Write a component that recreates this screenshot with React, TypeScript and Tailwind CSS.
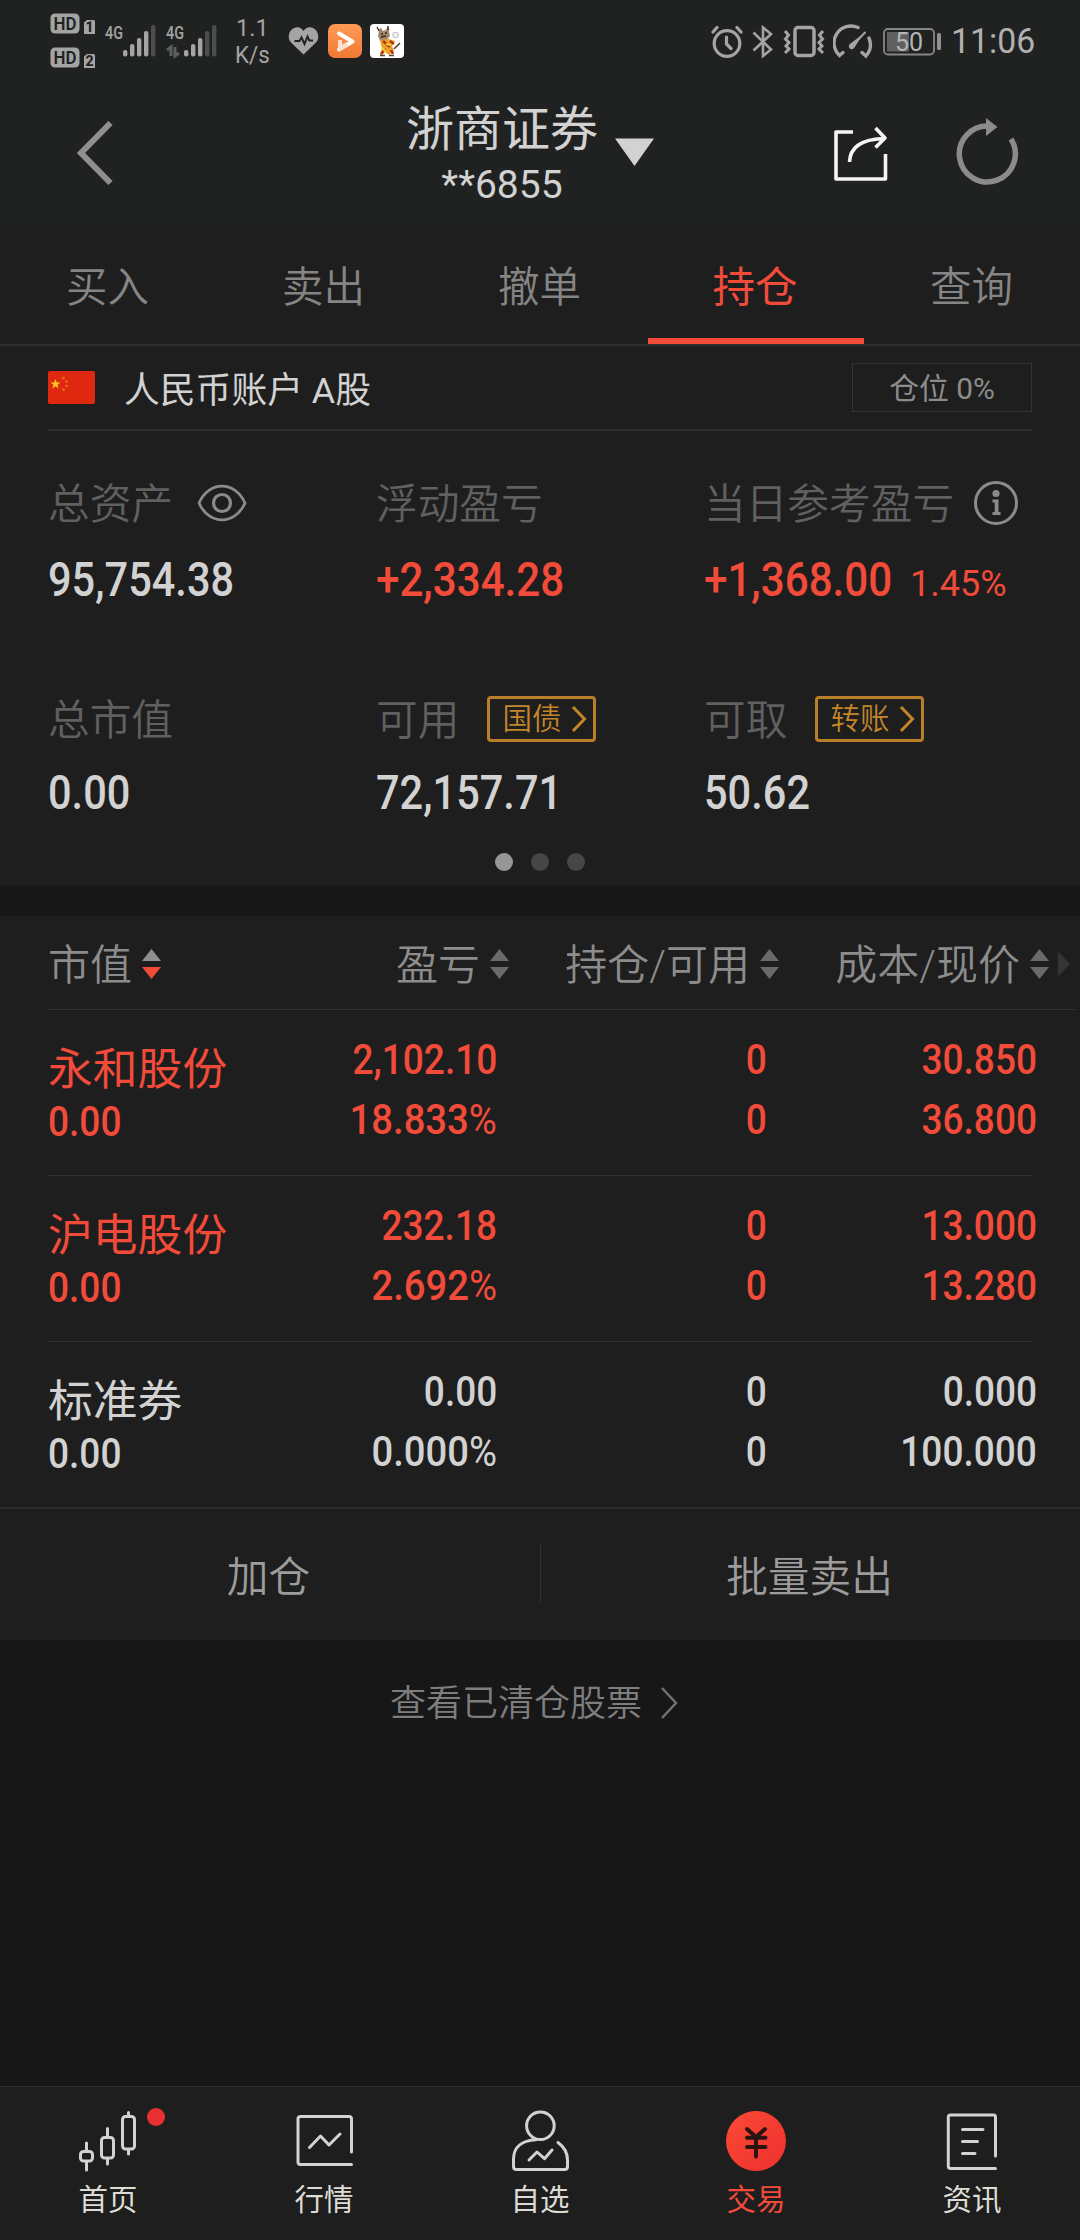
import React from 'react';

const RED = 'text-[#f24b3a]';
const WHITE = 'text-[#d2d2d2]';

function Digits({ children, right = false, big = false }: { children: string; right?: boolean; big?: boolean }) {
  const percent = children.endsWith('%');
  const signed = children.startsWith('+');
  const size = big
    ? `text-[49px] leading-[50px] ${signed ? 'scale-x-[0.86]' : 'scale-x-[0.848]'}`
    : `text-[42px] leading-[44px] ${percent ? 'scale-x-[0.91]' : 'scale-x-[0.882]'}`;
  return (
    <span className={`block w-max whitespace-nowrap font-medium ${size} ${right ? 'origin-right' : 'origin-left'}`}>
      {percent ? children.slice(0, -1) : children}
      {percent && <span className="font-normal">%</span>}
    </span>
  );
}

function HdBadge({ n }: { n: string }) {
  return (
    <svg className="overflow-visible" width="46" height="22" viewBox="0 0 46 22">
      <rect x="0.500" y="0.500" width="29" height="20" rx="4.500" fill="#a3a4a3" />
      <text x="15" y="17" textAnchor="middle" fontSize="18" fontWeight="600" fill="#202221" textLength="23" lengthAdjust="spacingAndGlyphs">HD</text>
      <path d="M34 9.500l3-2.500h6.500q1.500 0 1.500 1.500V21H34z" fill="#a3a4a3" />
      <text x="39.500" y="19.300" textAnchor="middle" fontSize="14" fontWeight="800" fill="#202221">{n}</text>
    </svg>
  );
}

function Signal({ level, data = false }: { level: number; data?: boolean }) {
  const tops = [49, 43, 37, 30, 24];
  return (
    <svg className="overflow-visible" width="54" height="34" viewBox="0 23 54 34">
      <text x="0" y="38" fontSize="19" fontWeight="500" fill="#a3a4a3" textLength="18" lengthAdjust="spacingAndGlyphs">4G</text>
      {data && <path d="M1 49l4-3v9M9 46v9l4-3" stroke="#5d5f5e" strokeWidth="3" fill="none" />}
      {tops.map((t, i) => (
        <rect key={t} x={18 + i * 7} y={t} width="4.400" height={55.5 - t} rx="2" fill={i < level ? '#a3a4a3' : '#4c4e4d'} />
      ))}
    </svg>
  );
}

function StatusBar() {
  return (
    <div className="flex h-[82px] items-center pl-[50px] pr-[44px] text-[#a3a4a3]">
      <div className="flex w-[55px] flex-col gap-[12px]">
        <HdBadge n="1" />
        <HdBadge n="2" />
      </div>
      <Signal level={4} />
      <div className="ml-[7px]"><Signal level={3} data /></div>
      <div className="ml-[15px] w-[52px] pt-[2px] text-[23.5px] leading-[27px]">
        <div className="pl-[1px]">1.1</div>
        <div className="origin-left scale-x-95">K/s</div>
      </div>
      <svg className="ml-px" width="31" height="28" viewBox="0 0 31 28">
        <path d="M15.500 27.500L3 15.500C-1 11 .5 3.500 6 1c4-1.700 7.500-.2 9.500 3 2-3.200 5.500-4.700 9.500-3 5.500 2.500 7 10 3 14.500z" fill="#a3a4a3" />
        <path d="M6.500 14h5l2-3.500 3 6.500 3-7.500 1.800 4H25" fill="none" stroke="#202221" strokeWidth="2" />
      </svg>
      <svg className="ml-[9px]" width="34" height="34" viewBox="0 0 34 34">
        <defs>
          <linearGradient id="app" x1="0" y1="0" x2="0" y2="1">
            <stop offset="0" stopColor="#ff9a56" />
            <stop offset="1" stopColor="#f07a32" />
          </linearGradient>
        </defs>
        <rect width="34" height="34" rx="7" fill="url(#app)" />
        <path d="M11 25.500L24.500 17.500 11 9.500" fill="none" stroke="#fff" strokeWidth="4" strokeLinejoin="round" strokeLinecap="round" />
        <path d="M12 16v8.500l7-4.500" fill="none" stroke="#ffe0cb" strokeWidth="4" strokeLinejoin="round" />
      </svg>
      <svg className="ml-[8px]" width="34" height="34" viewBox="0 0 34 34">
        <rect width="34" height="34" rx="4" fill="#fff" />
        <path d="M9 7q0-3 2-3l2 3 3-1 2-4q2 3 1 6l1 4-3 4-7 1-2-5z" fill="#a08670" />
        <path d="M9 7L7 3M18 6l0-4M11 10h2M15 9h2M11 13l5-1" stroke="#3c2a20" strokeWidth="1.300" />
        <path d="M10 16l9-1 6 2-3 5 2 5-5 4-4-3-3 3H10l2-6z" fill="#e9a32a" />
        <path d="M13 17l7 6M21 26l2 4M11 30l4-5M20 17l4 3" stroke="#b8321f" strokeWidth="2.600" />
        <path d="M16 20l5 1M12 24l4 4" stroke="#f7d21c" strokeWidth="2" />
        <path d="M24 25l6-6M10 31.500h5M19 31.500h5" stroke="#5d4536" strokeWidth="1.600" />
        <circle cx="25.500" cy="11" r="2.800" fill="#f4f4f4" stroke="#bbb" />
      </svg>

      <div className="ml-auto flex items-center">
        <svg width="32" height="33" viewBox="0 0 32 33" fill="none" stroke="#a3a4a3" strokeWidth="3.200" strokeLinecap="round">
          <circle cx="16" cy="18.500" r="12.800" />
          <path d="M15.500 12v7l4.500 4.500M2 7l4-4.500M30 7l-4-4.500" />
        </svg>
        <svg className="ml-[9px]" width="22" height="33" viewBox="0 0 22 33" fill="none" stroke="#a3a4a3" strokeWidth="2.600">
          <path d="M1.500 7.500L19 24.500l-8 6.500V2.500l8 6.500L1.500 25.500" />
        </svg>
        <svg className="ml-[9px]" width="42" height="33" viewBox="0 0 42 33" fill="none" stroke="#a3a4a3" strokeWidth="3.500">
          <rect x="12" y="2.500" width="19" height="28" rx="3" />
          <path d="M2 6l3.500 4L2.500 14l3.500 3.500-3 3.500 3 3-4 4M40 6l-3.500 4 3 4-3.500 3.500 3 3.500-3 3 4 4" strokeWidth="3" />
        </svg>
        <svg className="ml-[8px]" width="40" height="35" viewBox="0 0 40 35" fill="none" stroke="#a3a4a3" strokeWidth="3.400" strokeLinecap="round">
          <path d="M25 3.500A17 17 0 0 0 6.500 31.500l3.500-3M36 14q4 10-3 18l-4-3.500" />
          <path d="M32 8.500L19 22" strokeWidth="2" />
          <path d="M30 10L17.500 19.500a3 3 0 1 0 4 4z" fill="#a3a4a3" stroke="none" />
        </svg>
        <svg className="ml-[10px] mt-px" width="60" height="28" viewBox="0 0 60 28">
          <rect x="1" y="1" width="50" height="25.500" rx="4" fill="none" stroke="#858786" strokeWidth="1.800" />
          <rect x="4" y="4" width="22" height="19.500" fill="#606060" />
          <text x="26" y="22.500" textAnchor="middle" fontSize="25" fill="#b4b5b4">50</text>
          <rect x="54" y="5" width="4" height="17" rx="1.500" fill="#8f9190" />
        </svg>
        <span className="ml-[8px] w-[85px] origin-left scale-x-[0.965] pt-[1px] text-[35px] leading-[40px] text-[#b0b1b0]">11:06</span>
      </div>
    </div>
  );
}

function Header() {
  return (
    <div className="flex h-[142px] pl-[76px]">
      <svg className="mt-[37px]" width="38" height="68" viewBox="0 0 38 68">
        <path d="M34.500 4L5 34l29.500 30" fill="none" stroke="#8e8f8e" strokeWidth="6" />
      </svg>
      <div className={`ml-[292px] flex w-[192px] flex-col items-center whitespace-nowrap ${WHITE}`}>
        <div className="mt-[18px] text-[48px] leading-[60px]">浙商证券</div>
        <div className="mt-[2px] text-[39px] leading-[46px]">**6855</div>
      </div>
      <svg className="ml-[16px] mt-[56px]" width="41" height="29" viewBox="0 0 41 29">
        <path d="M1 0.500h39L20.500 28z" fill="#d2d2d2" />
      </svg>
      <svg className="ml-[178px] mt-[44px]" width="56" height="56" viewBox="0 0 56 56" fill="none" stroke="#f5f5f5" strokeWidth="3.600" strokeLinejoin="round">
        <path d="M20 6H3v47h49.500V28" />
        <path d="M16.500 36C17 22 27 13.500 50 12.500M42.500 2L52 12 42.500 21.500" />
      </svg>
      <svg className="ml-[64px] mt-[34px]" width="66" height="70" viewBox="0 0 66 70">
        <path d="M58 23A28 28 0 1 1 36 10" fill="none" stroke="#8a8b8a" strokeWidth="5.500" />
        <path d="M33 2l11.500 9L33 20z" fill="#8a8b8a" />
      </svg>
    </div>
  );
}

function Tabs() {
  return (
    <div className="grid h-[122px] grid-cols-5 border-b-2 border-[#2d2d2d]">
      {['买入', '卖出', '撤单', '持仓', '查询'].map((t) => {
        const active = t === '持仓';
        return (
          <div key={t} className={`flex flex-col items-center justify-between ${active ? RED : 'text-[#858585]'}`}>
            <span className={`pt-[34px] leading-[60px] ${active ? 'pr-[2px] text-[42.500px]' : 'pr-[1px] text-[41.500px] font-[350]'}`}>{t}</span>
            {active && <span className="h-[6px] w-full bg-[#f24b3a]" />}
          </div>
        );
      })}
    </div>
  );
}

function Account() {
  return (
    <div className="mx-[48px] flex h-[85px] items-center border-b-2 border-[#2d2d2d]">
      <svg className="rounded-[2px]" width="47" height="33" viewBox="0 0 47 33">
        <rect width="47" height="33" fill="#de2910" />
        <path d="M7.500 8l1.300 3.500h3.700l-3 2.300 1.100 3.600-3.100-2.200-3.100 2.200 1.100-3.600-3-2.300h3.700z" fill="#ffc61a" />
        <g fill="#f0701a">
          <circle cx="15.500" cy="7" r="1.300" />
          <circle cx="18.500" cy="10.500" r="1.300" />
          <circle cx="18.500" cy="15" r="1.300" />
          <circle cx="15.500" cy="18.500" r="1.300" />
        </g>
      </svg>
      <span className={`ml-[29px] mt-[6px] text-[35.800px] leading-[50px] ${WHITE}`}>人民币账户 A股</span>
      <span className="ml-auto flex h-[49px] w-[180px] items-center justify-center border border-[#353535] pt-[2px] text-[29.800px] leading-[40px] text-[#8c8c8c]">仓位 0%</span>
    </div>
  );
}

function Chip({ children }: { children: string }) {
  return (
    <span className="-mt-[1px] ml-[28px] flex h-[46px] w-[109px] items-center rounded-[4px] border-[3px] border-[#b97f28] pl-[12px] text-[29.500px] leading-[40px] text-[#c4862a]">
      {children}
      <svg className="ml-[10px]" width="17" height="28" viewBox="0 0 17 28">
        <path d="M2 2l11.500 12L2 26" fill="none" stroke="#c4862a" strokeWidth="3" />
      </svg>
    </span>
  );
}

function Label({ children, extra }: { children: string; extra?: React.ReactNode }) {
  return (
    <div className="flex h-[46px] items-center whitespace-nowrap text-[41.700px] leading-[46px] font-[350] text-[#606060]">
      <span className="pt-[4px]">{children}</span>
      {extra}
    </div>
  );
}

function Assets() {
  return (
    <div className="h-[455px] pl-[48px]">
      <div className="grid grid-cols-[328px_328px_1fr] pt-[49px]">
        <div>
          <Label
            extra={
              <svg className="ml-[24px]" width="50" height="38" viewBox="0 0 50 38" fill="none" stroke="#8b8b8b" strokeWidth="2.800">
                <path d="M2 19C12-3.500 38-3.500 48 19 38 41.500 12 41.500 2 19z" strokeLinejoin="round" />
                <circle cx="25" cy="19" r="8.500" strokeWidth="3.200" />
              </svg>
            }
          >
            总资产
          </Label>
          <div className={`mt-[29px] ${WHITE}`}><Digits big>95,754.38</Digits></div>
        </div>
        <div>
          <Label>浮动盈亏</Label>
          <div className={`mt-[29px] ${RED}`}><Digits big>+2,334.28</Digits></div>
        </div>
        <div>
          <Label
            extra={
              <svg className="ml-[19px]" width="46" height="46" viewBox="0 0 46 46">
                <circle cx="23" cy="23" r="20.500" fill="none" stroke="#8b8b8b" strokeWidth="3" />
                <circle cx="23" cy="13.500" r="3.600" fill="#8b8b8b" />
                <path d="M19.500 19.500h6v12.500h2v3h-8v-3h2.200v-9.500h-2.200z" fill="#8b8b8b" />
              </svg>
            }
          >
            当日参考盈亏
          </Label>
          <div className={`mt-[29px] flex items-baseline ${RED}`}>
            <div className="w-[206px]"><Digits big>+1,368.00</Digits></div>
            <span className="text-[36px] leading-[40px]">1.45%</span>
          </div>
        </div>
      </div>
      <div className="mt-[91px] grid grid-cols-[328px_328px_1fr]">
        <div>
          <Label>总市值</Label>
          <div className={`mt-[26px] ${WHITE}`}><Digits big>0.00</Digits></div>
        </div>
        <div>
          <Label extra={<Chip>国债</Chip>}>可用</Label>
          <div className={`mt-[26px] ${WHITE}`}><Digits big>72,157.71</Digits></div>
        </div>
        <div>
          <Label extra={<Chip>转账</Chip>}>可取</Label>
          <div className={`mt-[26px] ${WHITE}`}><Digits big>50.62</Digits></div>
        </div>
      </div>
      <div className="-ml-[48px] mt-[35px] flex justify-center gap-[18px]">
        <span className="size-[18px] rounded-full bg-[#969696]" />
        <span className="size-[18px] rounded-full bg-[#464648]" />
        <span className="size-[18px] rounded-full bg-[#464648]" />
      </div>
    </div>
  );
}

function Sort({ up = '#6a6a6a', down = '#6a6a6a' }: { up?: string; down?: string }) {
  return (
    <svg className="-mt-[2px] ml-[10px] shrink-0" width="19" height="30" viewBox="0 0 19 30">
      <path d="M9.500 0L19 12H0z" fill={up} />
      <path d="M9.500 30L19 18H0z" fill={down} />
    </svg>
  );
}

const stocks = [
  { name: '永和股份', value: '0.00', cols: [['2,102.10', '18.833%'], ['0', '0'], ['30.850', '36.800']], color: RED },
  { name: '沪电股份', value: '0.00', cols: [['232.18', '2.692%'], ['0', '0'], ['13.000', '13.280']], color: RED },
  { name: '标准券', value: '0.00', cols: [['0.00', '0.000%'], ['0', '0'], ['0.000', '100.000']], color: WHITE },
];

function Holdings() {
  return (
    <div className="bg-[#1e1e1e]">
      <div className="grid h-[93px] grid-cols-[239px_270px_270px_270px_31px] items-center pt-[5px] text-[42px] leading-[50px] font-[350] text-[#8c8c8c]">
        <div className="flex items-center pl-[48px]"><span className="pt-[1px]">市值</span><Sort up="#8f8f8f" down="#f24b3a" /></div>
        {['盈亏', '持仓/可用', '成本/现价'].map((h) => (
          <div key={h} className="flex items-center justify-end whitespace-nowrap"><span className="pt-[1px]">{h}</span><Sort /></div>
        ))}
        <svg className="-mt-[2px] ml-[9px]" width="12" height="26" viewBox="0 0 12 26">
          <path d="M0 0.500L12 13 0 25.500z" fill="#343434" />
        </svg>
      </div>
      {stocks.map((s, i) => (
        <div key={s.name} className={`h-[166px] ${s.color}`}>
          <div className={`h-px bg-[#303030] ${i === 0 ? 'ml-[48px] mr-[3px]' : 'mx-[48px]'}`} />
          <div className="grid grid-cols-[227px_270px_270px_270px] pt-[28px]">
            <div className="whitespace-nowrap pl-[48px] pt-[5px]">
              <div className="text-[44.800px] leading-[54px]">{s.name}</div>
              <div className="mt-[3px]"><Digits>{s.value}</Digits></div>
            </div>
            {s.cols.map((c, j) => (
              <div key={j} className="flex flex-col items-end gap-[16px]">
                <Digits right>{c[0]}</Digits>
                <Digits right>{c[1]}</Digits>
              </div>
            ))}
          </div>
        </div>
      ))}
      <div className="flex h-[133px] items-center border-t-2 border-[#2b2b2b] pb-[1px] text-[41.700px] leading-[50px] font-[350] text-[#9c9c9c]">
        <span className="flex-1 pr-[3px] pt-[7px] text-center">加仓</span>
        <span className="h-[60px] w-px bg-[#303030]" />
        <span className="flex-1 pr-[2px] pt-[7px] text-center">批量卖出</span>
      </div>
    </div>
  );
}

const zig = { fill: 'none', stroke: '#d2d2d2', strokeWidth: 3, strokeLinecap: 'round' as const, strokeLinejoin: 'round' as const };

const navItems = [
  {
    label: '首页',
    icon: (
      <svg width="60" height="62" viewBox="0 0 60 62" {...zig}>
        <rect x="2.500" y="41.500" width="12" height="9.500" rx="3" />
        <path d="M8.500 33v8M8.500 51.500v8.500M29.500 18.500V27M29.500 48.500V54M50.500 2.500V6M50.500 40.500V44" />
        <rect x="23.500" y="27.500" width="12" height="20.500" rx="3" />
        <rect x="44.500" y="6.500" width="12" height="32.500" rx="3" />
      </svg>
    ),
  },
  {
    label: '行情',
    icon: (
      <svg width="60" height="62" viewBox="0 0 60 62" {...zig}>
        <path d="M57.500 42V9q0-2.500-2.500-2.500H6.500Q4 6.500 4 9v43q0 2.500 2.500 2.500h51" />
        <path d="M15.500 37.500L26.500 26l8.500 9 11-11" />
      </svg>
    ),
  },
  {
    label: '自选',
    icon: (
      <svg width="60" height="62" viewBox="0 0 60 62" {...zig}>
        <circle cx="30.400" cy="15.700" r="13.800" />
        <path d="M26 29.700C12 30.500 3.500 37 3.500 49v7.500Q3.500 59.500 6.500 59.500h48q3 0 3-3V50c0-8-4-13.500-9.500-17.500" />
        <path d="M19 50l8-8 7.500 6.700L42 40" />
      </svg>
    ),
  },
  {
    label: '交易',
    icon: (
      <svg width="60" height="62" viewBox="0 0 60 62" fill="none">
        <defs>
          <linearGradient id="coin" x1="0" y1="0" x2="1" y2="1">
            <stop offset="0" stopColor="#fb4a34" />
            <stop offset="1" stopColor="#ee2f30" />
          </linearGradient>
        </defs>
        <circle cx="30" cy="31" r="30" fill="url(#coin)" />
        <path d="M21 19l9 8 9-8M21 27.800h18.500M21 37h18.500M30 27v19.500" stroke="#2b1312" strokeWidth="4" strokeLinecap="round" />
      </svg>
    ),
  },
  {
    label: '资讯',
    icon: (
      <svg width="60" height="62" viewBox="0 0 60 62" {...zig}>
        <path d="M53.500 46V7q0-2-2-2H8.500Q6.300 5 6.300 7v49q0 2.500 2.200 2.500h45" />
        <path d="M20.500 19.500h20.500M20.500 31.500h15M20.500 43.500H33" />
      </svg>
    ),
  },
];

function BottomNav() {
  return (
    <div className="mt-auto grid h-[154px] grid-cols-5 border-t border-[#2e2e2e] bg-[#1e1e1e]">
      {navItems.map((n) => (
        <div key={n.label} className={`flex flex-col items-center pt-[23px] ${n.label === '交易' ? RED : 'text-[#dcdcd4]'}`}>
          <div className="relative">
            {n.icon}
            {n.label === '首页' && <span className="absolute left-[69px] top-[-2px] size-[18px] rounded-full bg-[#e93030]" />}
          </div>
          <span className="mt-[8px] text-[29.500px] leading-[40px]">{n.label}</span>
        </div>
      ))}
    </div>
  );
}

export default function App() {
  return (
    <div className="flex h-[2240px] w-[1080px] flex-col overflow-hidden bg-[#171717] font-[Roboto,'Noto_Sans_CJK_SC',sans-serif]">
      <div className="bg-[#202221]">
        <StatusBar />
        <Header />
      </div>
      <div className="mb-[30px] bg-[#1e1e1e]">
        <Tabs />
        <Account />
        <Assets />
      </div>
      <Holdings />
      <div className="mt-[37px] flex items-center justify-center pr-[11px] text-[36px] leading-[50px] font-[350] text-[#7e7e7e]">
        <span className="pt-[2px]">查看已清仓股票</span>
        <svg className="ml-[18px]" width="19" height="32" viewBox="0 0 19 32">
          <path d="M2 1l14 15L2 31" fill="none" stroke="#707070" strokeWidth="2.500" />
        </svg>
      </div>
      <BottomNav />
    </div>
  );
}
